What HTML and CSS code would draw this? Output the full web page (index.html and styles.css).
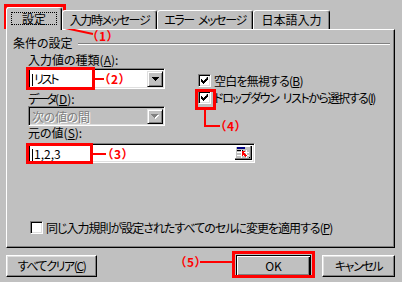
FILE: index.html
```html
<!DOCTYPE html>
<html lang="ja">
<head>
  <meta charset="UTF-8">
  <title>データの入力規則</title>
  <link rel="stylesheet" href="styles.css">
</head>
<body>
  <div class="tabs">
    <div class="tab tab-settings active"><span class="focus">設定</span></div>
    <div class="tab tab-input kana">入力時メッセージ</div>
    <div class="tab tab-error kana">エラー メッセージ</div>
    <div class="tab tab-ime">日本語入力</div>
  </div>

  <div class="panel">
    <div class="group-title"><span>条件の設定</span><i class="rule"></i></div>

    <div class="criteria">
      <div class="left-col">
        <div class="label">入力値の種類(<u>A</u>):</div>
        <div class="combo">
          <span class="value caret kana-wide">リスト</span>
          <span class="drop"><svg width="7" height="4" viewBox="0 0 7 4"><path d="M0 0h7v1h-1v1h-1v1h-1v1h-1v-1h-1v-1h-1v-1h-1z"/></svg></span>
        </div>
        <div class="label label-data"><span class="kana-wide">データ</span>(<u>D</u>):</div>
        <div class="combo disabled">
          <span class="value">次の値の間</span>
          <span class="drop"><svg width="8" height="5" viewBox="0 0 8 5"><path class="arrow-hi" d="M1 1h7v1h-1v1h-1v1h-1v1h-1v-1h-1v-1h-1v-1h-1z"/><path d="M0 0h7v1h-1v1h-1v1h-1v1h-1v-1h-1v-1h-1v-1h-1z"/></svg></span>
        </div>
      </div>
      <div class="right-col">
        <div class="check"><span class="box checked"></span><span class="kana-light">空白を無視する(<u>B</u>)</span></div>
        <div class="check"><span class="box checked"></span><span class="kana">ドロップダウン リストから選択する(<u>I</u>)</span></div>
      </div>
    </div>

    <div class="label source-label">元の値(<u>S</u>):</div>
    <div class="source-input">
      <span class="value caret">1,2,3</span>
      <span class="refedit">
        <svg width="15" height="13" viewBox="0 0 15 13">
          <rect x="1" y="1" width="8" height="2" fill="#000080"/>
          <rect x="1" y="4" width="6" height="1" fill="#000"/>
          <rect x="1" y="6" width="12" height="1" fill="#fff"/>
          <rect x="1" y="9" width="12" height="1" fill="#fff"/>
          <rect x="5" y="4" width="1" height="8" fill="#fff"/>
          <rect x="10" y="4" width="1" height="8" fill="#fff"/>
          <path d="M6 5h3v1h-1v1h1v1h1v1h1v1h-1v1h-1v-1h-1v-1h-1v1h-1z" fill="#f00"/>
          <rect x="13" y="11" width="1" height="1" fill="#000"/>
        </svg>
      </span>
    </div>

    <div class="check apply"><span class="box"></span><span class="kana-apply">同じ入力規則が設定されたすべてのセルに変更を適用する(<u>P</u>)</span></div>
  </div>

  <div class="buttons">
    <div class="btn btn-clear kana">すべてクリア(<u>C</u>)</div>
    <div class="btn btn-ok default">OK</div>
    <div class="btn btn-cancel kana">キャンセル</div>
  </div>

  <!-- annotation overlay -->
  <svg class="marks" width="402" height="282" viewBox="0 0 402 282">
    <g fill="none" stroke="#f00">
      <rect x="5.5" y="5.5" width="59" height="22" stroke-width="3"/>
      <line x1="65" y1="28" x2="93" y2="34" stroke-width="2"/>
      <rect x="27.5" y="68.5" width="66" height="20" stroke-width="3"/>
      <line x1="95" y1="79" x2="104" y2="79" stroke-width="2"/>
      <rect x="27.5" y="144.5" width="64" height="18" stroke-width="3"/>
      <line x1="93" y1="154" x2="106" y2="154" stroke-width="2"/>
      <rect x="196.5" y="90.5" width="18" height="18" stroke-width="3"/>
      <polyline points="205,110 205,126 220,126" stroke-width="2"/>
      <rect x="233.5" y="252.5" width="80" height="24" stroke-width="3"/>
      <line x1="200" y1="262" x2="232" y2="262" stroke-width="2"/>
    </g>
  </svg>
  <span class="note note-1">（1）</span>
  <span class="note note-2">（2）</span>
  <span class="note note-3">（3）</span>
  <span class="note note-4">（4）</span>
  <span class="note note-5">（5）</span>
</body>
</html>
```

FILE: styles.css
```css
* {
  box-sizing: border-box;
}

body {
  margin: 0;
  width: 402px;
  height: 282px;
  overflow: hidden;
  position: relative;
  background: #c0c0c0;
  color: #000;
  font-family: "Noto Sans CJK JP", "Noto Sans", sans-serif;
  font-size: 12px;
  font-feature-settings: "palt" 1;
}

u {
  text-decoration: underline;
  text-underline-offset: 1px;
}

/* MS UI Gothic draws kana narrower than Noto does */
.kana-light { letter-spacing: -0.8px; }
.kana-apply { letter-spacing: -1px; }
.kana { letter-spacing: -1.4px; word-spacing: 3px; }
.kana-wide { letter-spacing: -2.2px; }

/* tab strip */

.tabs {
  display: flex;
  align-items: flex-end;
  height: 29px;
  padding-left: 6px;
  position: relative;
  z-index: 1;
}

.tab {
  height: 19px;
  line-height: 18px;
  text-align: center;
  background: #c0c0c0;
  border: 1px solid;
  border-color: #fff #000 transparent #fff;
  border-bottom: none;
  border-radius: 3px 3px 0 0;
  box-shadow: inset -1px 0 #808080;
}

.tab.active {
  height: 23px;
  margin-bottom: -1px;
  padding-top: 4px;
  line-height: 14px;
}

.tab-settings { width: 56px; }
.tab-input { width: 95px; }
.tab-error { width: 96px; }
.tab-ime { width: 77px; }

.focus {
  display: inline-block;
  width: 46px;
  height: 13px;
  line-height: 11px;
  border: 1px dotted #000;
}

/* property page */

.panel {
  margin-left: 6px;
  width: 389px;
  height: 219px;
  border: 1px solid;
  border-color: #fff #000 #000 #fff;
  box-shadow: inset -1px -1px #808080;
  padding: 6px 4px 0 6px;
  display: flex;
  flex-direction: column;
}

.group-title {
  display: flex;
  height: 14px;
  line-height: 14px;
}

.group-title .rule {
  flex: 1;
  margin: 7px 0 0 5px;
  height: 2px;
  border-top: 1px solid #808080;
  border-bottom: 1px solid #fff;
}

.label {
  height: 14px;
  line-height: 14px;
  white-space: nowrap;
}

.label-data {
  margin-top: 3px;
}

.criteria {
  display: flex;
  padding-left: 15px;
  margin-top: 3px;
}

.left-col {
  flex: none;
  width: 137px;
}

.right-col {
  flex: none;
  margin-left: 33px;
  padding-top: 19px;
  display: flex;
  flex-direction: column;
}

.combo {
  margin-top: 1px;
  height: 21px;
  display: flex;
  background: #fff;
  border: 1px solid;
  border-color: #808080 #fff #fff #808080;
  box-shadow: inset 1px 1px #000, inset -1px -1px #dfdfdf;
  padding: 2px 1px 1px 2px;
}

.combo .value {
  flex: 1;
  line-height: 16px;
  padding-left: 1px;
}

.combo .drop {
  width: 16px;
  display: flex;
  align-items: center;
  justify-content: center;
  background: #c0c0c0;
  border: 1px solid;
  border-color: #dfdfdf #000 #000 #dfdfdf;
  box-shadow: inset 1px 1px #fff, inset -1px -1px #808080;
}

.combo.disabled {
  margin-top: 0;
  height: 20px;
  background: #c0c0c0;
}

.combo.disabled .value {
  color: #808080;
  text-shadow: 1px 1px #fff;
  letter-spacing: -0.3px;
  line-height: 15px;
}

.combo.disabled svg {
  fill: #808080;
}

.combo.disabled .arrow-hi {
  fill: #fff;
}

.caret::before {
  content: "";
  display: inline-block;
  width: 1px;
  height: 12px;
  margin-right: 1px;
  vertical-align: -2px;
  background: #000;
}

.source-label {
  margin: 0 0 0 15px;
}

.source-input {
  margin: 3px 0 0 15px;
  width: 227px;
  height: 20px;
  display: flex;
  background: #fff;
  border: 1px solid;
  border-color: #808080 #fff #fff #808080;
  box-shadow: inset 1px 1px #000, inset -1px -1px #dfdfdf;
  padding: 2px;
}

.source-input .value {
  flex: 1;
  line-height: 15px;
  padding-left: 1px;
}

.refedit {
  width: 17px;
  display: flex;
  align-items: center;
  justify-content: center;
  background: #c0c0c0;
  border-right: 1px solid #000;
  border-bottom: 1px solid #000;
  box-shadow: inset -1px -1px #808080, inset 1px 1px #fff;
}

/* check boxes */

.check {
  display: flex;
  align-items: center;
  gap: 3px;
  height: 17px;
  white-space: nowrap;
}

.box {
  flex: none;
  width: 13px;
  height: 13px;
  background: #fff;
  border: 1px solid;
  border-color: #808080 #fff #fff #808080;
  box-shadow: inset 1px 1px #000, inset -1px -1px #dfdfdf;
}

.box.checked {
  background: #fff url("data:image/svg+xml,%3Csvg xmlns='http://www.w3.org/2000/svg' width='7' height='7' viewBox='0 0 7 7'%3E%3Cpath d='M6 0h1v3h-1v1h-1v1h-1v1h-1v1h-1v-1h-1v-1h-1v-3h1v1h1v1h1v-1h1v-1h1z'/%3E%3C/svg%3E") no-repeat 2px 2px;
}

.check.apply {
  margin: auto 0 11px 17px;
}

/* dialog buttons */

.buttons {
  display: flex;
  margin-top: 7px;
  padding: 0 7px 0 6px;
}

.btn {
  height: 22px;
  line-height: 20px;
  text-align: center;
  background: #c0c0c0;
  border: 1px solid;
  border-color: #fff #000 #000 #fff;
  box-shadow: inset -1px -1px #808080, inset 1px 1px #dfdfdf;
}

.btn-clear { width: 91px; }

.btn-ok {
  width: 75px;
  margin-left: auto;
}

.btn-cancel {
  width: 73px;
  margin-left: 11px;
}

.btn.default {
  border-color: #000;
  box-shadow: inset 1px 1px #fff, inset -1px -1px #000, inset -2px -2px #808080;
}

/* red callouts */

.marks {
  position: absolute;
  left: 0;
  top: 0;
  pointer-events: none;
}

.note {
  position: absolute;
  color: #f00;
  font-weight: 700;
  font-size: 12px;
  line-height: 14px;
  letter-spacing: 1px;
}

.note-1 { left: 92px; top: 29px; }
.note-2 { left: 104px; top: 72px; }
.note-3 { left: 107px; top: 147px; }
.note-4 { left: 220px; top: 119px; }
.note-5 { left: 180px; top: 255px; }
```
